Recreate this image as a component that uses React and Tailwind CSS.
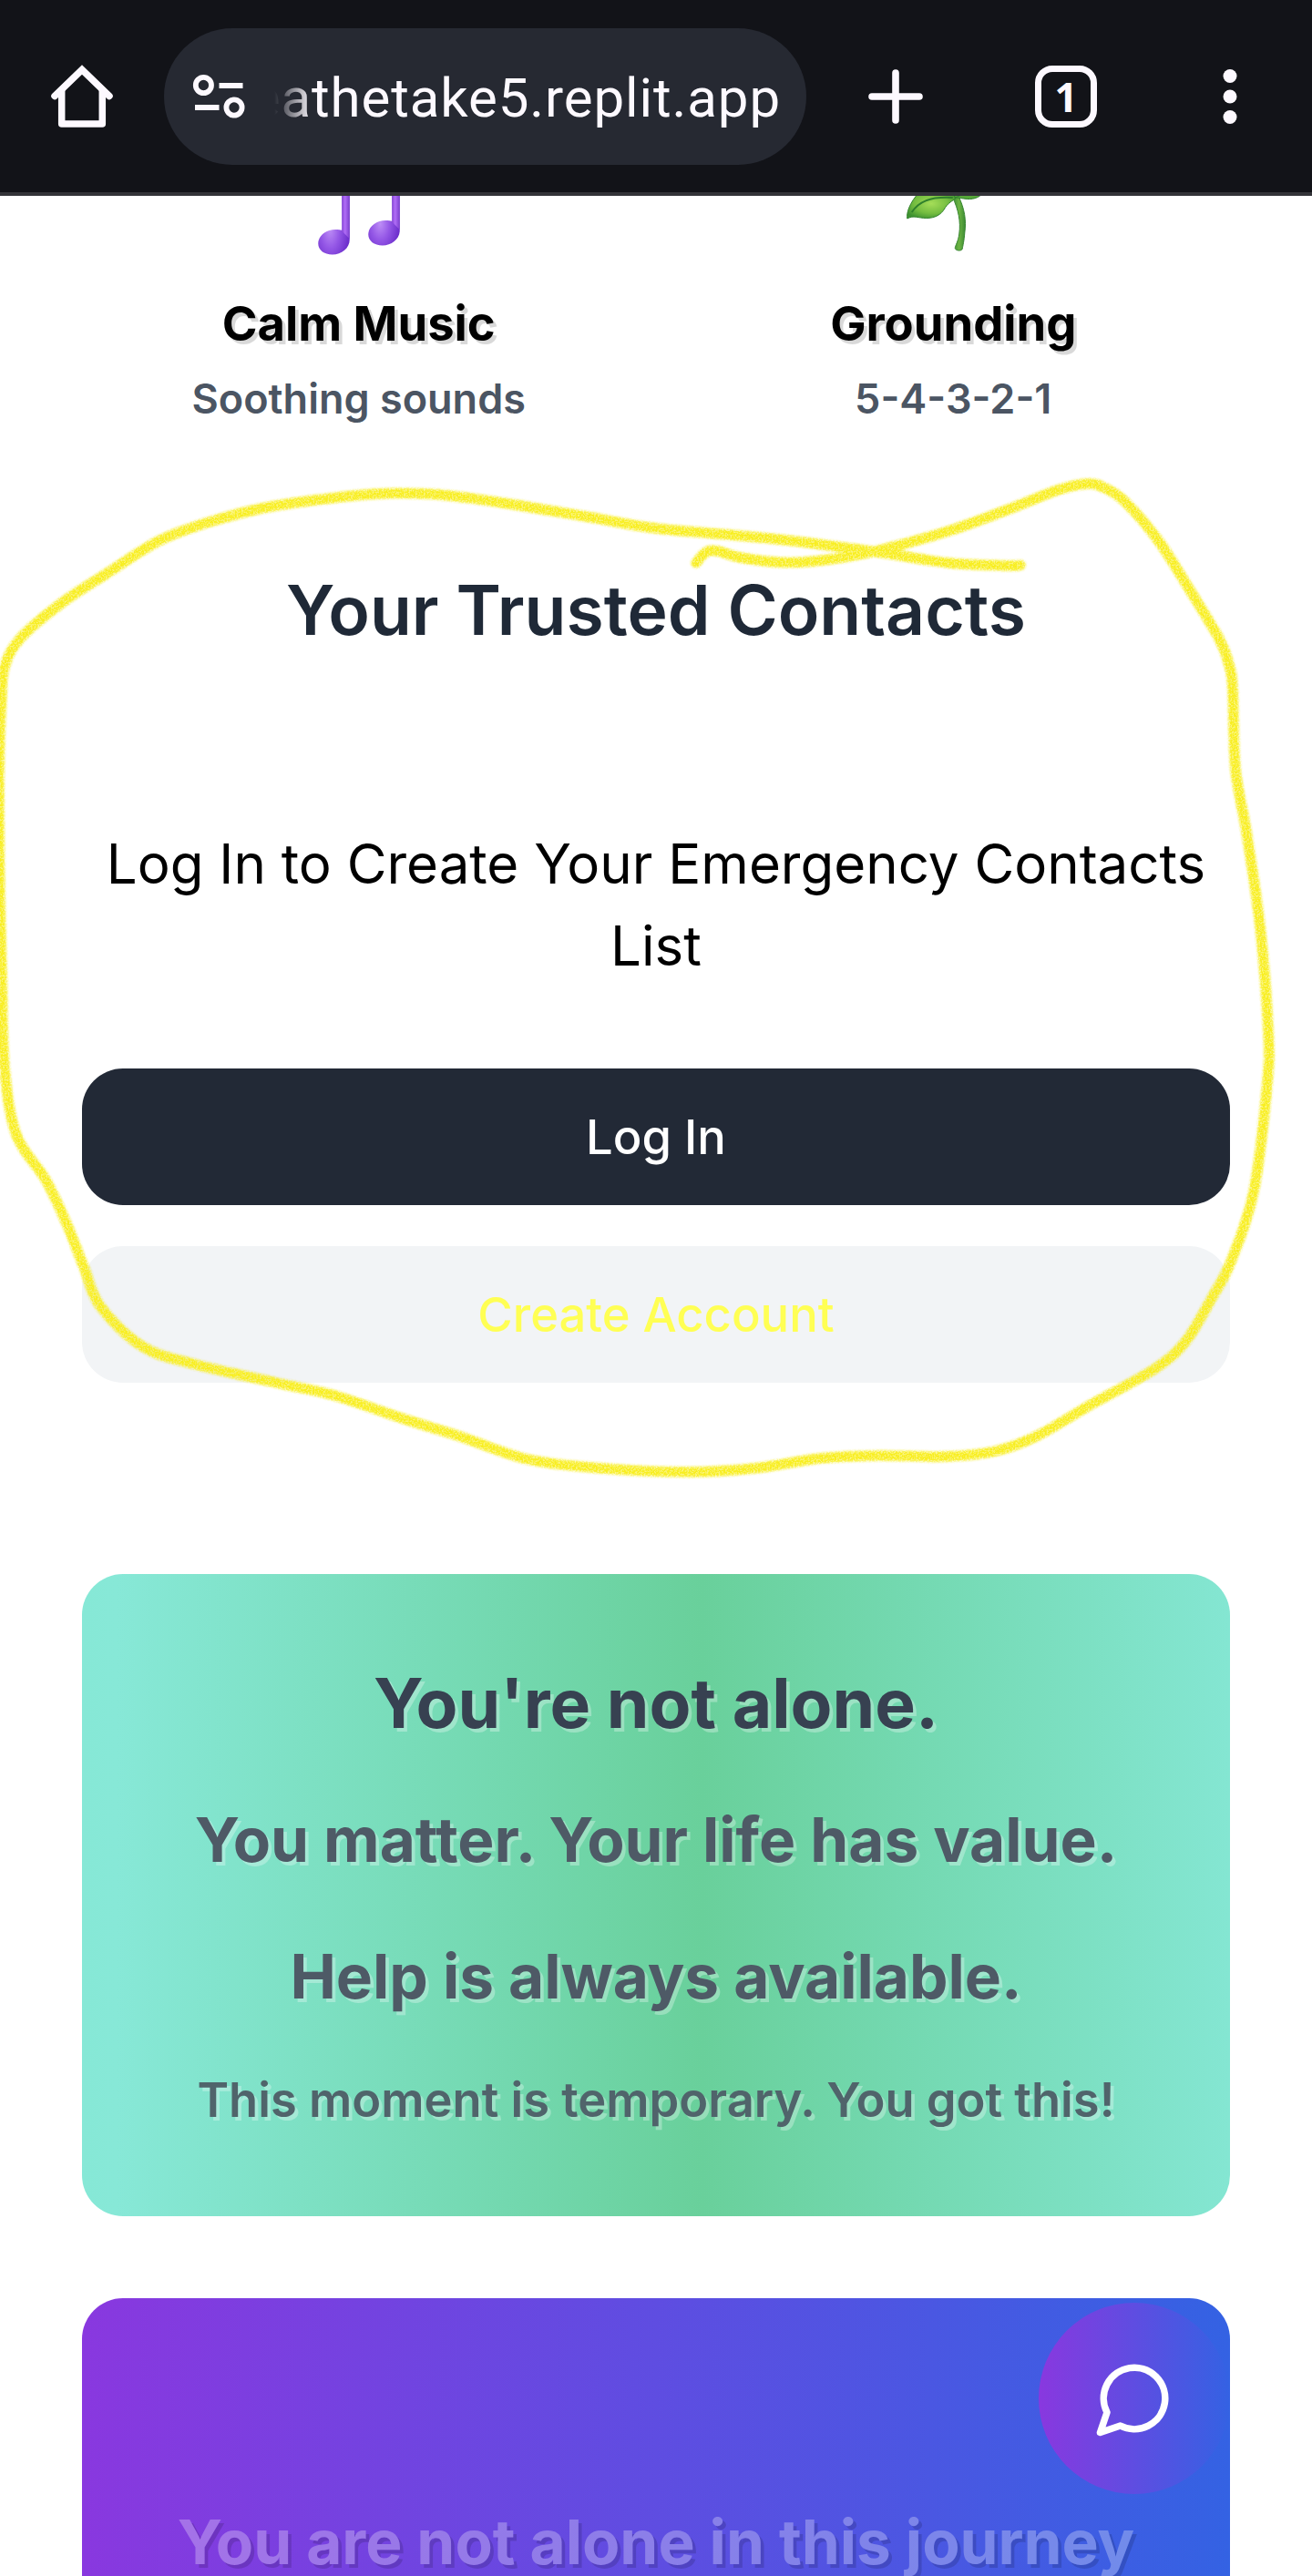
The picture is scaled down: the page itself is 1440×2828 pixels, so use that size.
const LOOP = [
  [1120, 620.5], [1106, 621], [1041, 618], [959, 605.5], [844, 591], [720, 580], [643, 567], [551, 552],
  [482, 543], [436, 541.5], [390, 544], [298, 556], [230, 573], [174, 594], [115, 631],
  [69, 661], [23, 700], [5, 732], [1.5, 770], [-1, 844], [-0.5, 959], [2, 1074], [5, 1172],
  [18, 1246], [50, 1295], [73, 1343], [92, 1391], [110, 1434], [156, 1478], [211, 1497],
  [303, 1518], [367, 1532], [441, 1557], [505, 1577], [579, 1602], [661, 1612], [753, 1616],
  [827, 1612], [900, 1601], [964, 1598], [1038, 1599], [1093, 1593], [1139, 1576],
  [1194, 1544], [1267, 1503], [1301, 1473], [1330, 1425], [1351, 1385],
  [1376, 1308], [1391, 1189], [1392, 1131], [1383, 1017], [1368, 913], [1356, 844],
  [1353, 758], [1349, 730], [1338, 701], [1303, 643], [1271, 593], [1234, 550],
  [1211, 535], [1193, 531], [1161, 538], [1110, 558], [1041, 583], [959, 605.5],
  [904, 615], [858, 617.5], [812, 612], [788, 605], [775, 606], [764, 618],
];

// Catmull-Rom spline through the given points.
function smooth(pts) {
  let d = `M${pts[0][0]} ${pts[0][1]}`;
  for (let i = 0; i < pts.length - 1; i++) {
    const a = pts[i - 1] || pts[i];
    const b = pts[i];
    const c = pts[i + 1];
    const e = pts[i + 2] || c;
    d += `C${b[0] + (c[0] - a[0]) / 6} ${b[1] + (c[1] - a[1]) / 6} ${c[0] - (e[0] - b[0]) / 6} ${c[1] - (e[1] - b[1]) / 6} ${c[0]} ${c[1]}`;
  }
  return d;
}

function BrowserBar() {
  return (
    <header className="flex h-[215px] items-start border-b-4 border-[#333338] bg-[#121318] pt-[31px] text-[#fdf9ff]">
      <svg className="ml-[45px] mt-[30px] size-[90px] shrink-0" viewBox="45 61 90 90" fill="none" stroke="currentColor" strokeWidth="7.5" strokeLinejoin="round" strokeLinecap="round">
        <path d="M60 105.5 L90 76.5 L120 105.5" strokeLinejoin="miter" />
        <path d="M67.7 99V136H112.3V99" />
      </svg>
      <div className="ml-[45px] flex h-[150px] w-[705px] shrink-0 items-center overflow-hidden rounded-full bg-[#262932]">
        <svg className="ml-[30px] h-[60px] w-[60px] shrink-0" viewBox="210 76 60 60" fill="none" stroke="currentColor" strokeWidth="5.8">
          <circle cx="223.4" cy="93.5" r="8.6" />
          <circle cx="257" cy="118" r="8.6" />
          <path d="M240.5 94H266.5M214 118H240.5" />
        </svg>
        <div className="ml-[31px] mt-[3px] flex h-[80px] w-[556px] items-center justify-end overflow-hidden whitespace-nowrap font-['Roboto',sans-serif] text-[60px] leading-[80px] tracking-[0.9px] [mask-image:linear-gradient(to_right,transparent_0,black_42px)]">
          <span>eathetake5.replit.app</span>
        </div>
      </div>
      <svg className="ml-[53px] mt-[30px] size-[90px] shrink-0" viewBox="938 61 90 90" stroke="currentColor" strokeWidth="7.6" strokeLinecap="round">
        <path d="M983 80V132M957 106H1009" />
      </svg>
      <div className="ml-[108px] mt-[41px] flex h-[68px] w-[68px] shrink-0 items-center justify-center rounded-[19px] border-[7.5px] border-current font-['Open_Sans',sans-serif] text-[44px] font-bold leading-none">
        1
      </div>
      <svg className="ml-[101px] mt-[30px] size-[90px] shrink-0" viewBox="1305 61 90 90" fill="currentColor">
        <circle cx="1350" cy="83.5" r="7.5" />
        <circle cx="1350" cy="106" r="7.5" />
        <circle cx="1350" cy="128.5" r="7.5" />
      </svg>
    </header>
  );
}

function NoteArt() {
  return (
    <svg className="h-[85px] w-[130px]" viewBox="328.75 215 130 85">
      <defs>
        <radialGradient id="head" cx="0.38" cy="0.6" r="0.6">
          <stop offset="0" stopColor="#bd8df6" />
          <stop offset="0.5" stopColor="#9457e6" />
          <stop offset="1" stopColor="#6d2fcc" />
        </radialGradient>
        <linearGradient id="stem">
          <stop offset="0" stopColor="#8a49d8" />
          <stop offset="0.4" stopColor="#b06df6" />
          <stop offset="1" stopColor="#7c3fce" />
        </linearGradient>
      </defs>
      <path d="M375 210H383.5V263C383.500 272.500 374.500 279.500 364.500 279.500C355.500 279.500 349 274.500 349 267.500C349 258.500 358 252 368 252C371 252 373.500 252.400 375 252.800Z" fill="url(#head)" />
      <path d="M375.300 210H383.300V262L375.300 254Z" fill="url(#stem)" />
      <path d="M430 210H438.500V253C438.500 262.500 429.500 269.500 419.500 269.500C410.500 269.500 404 264.500 404 257.500C404 248.500 413 242 423 242C426 242 428.500 242.400 430 242.800Z" fill="url(#head)" />
      <path d="M430.300 210H438.300V252L430.300 244Z" fill="url(#stem)" />
    </svg>
  );
}

function HerbArt() {
  return (
    <svg className="h-[85px] w-[130px]" viewBox="981.25 215 130 85">
      <defs>
        <radialGradient id="leaf" cx="0.5" cy="0.45" r="0.6">
          <stop offset="0" stopColor="#a5dd58" />
          <stop offset="0.6" stopColor="#74bd40" />
          <stop offset="1" stopColor="#3d9130" />
        </radialGradient>
        <linearGradient id="twig">
          <stop offset="0" stopColor="#3c8b34" />
          <stop offset="0.5" stopColor="#6cb443" />
          <stop offset="1" stopColor="#3c8b34" />
        </linearGradient>
      </defs>
      <path d="M1046 212L1052 215C1059 229 1061 242 1059 256C1058.500 264 1057 270 1056.500 273C1056 276 1049 275.500 1048.500 272.500C1048.500 270 1052 265 1053 257C1055 243 1052 230 1046 217Z" fill="url(#twig)" stroke="#35842f" strokeWidth="1" />
      <path d="M996 240C995 234 998 223 1010 210H1045L1049 218C1043 222 1040 224 1037 229C1033 236 1026 239.500 1017 239.500C1008 239.500 1003 236 996 240Z" fill="url(#leaf)" stroke="#35842f" strokeWidth="1" />
      <path d="M1001 233C1008 222 1020 215.500 1046 217" fill="none" stroke="#2f7f2c" strokeWidth="2" />
      <path d="M1048 217C1054 215 1056 214 1060 210H1080C1077 216 1070 219 1062 218.500C1056 218 1053 217 1048 217Z" fill="#56a63a" stroke="#2f7f2c" strokeWidth="1" />
    </svg>
  );
}

function Tool({ art, title, note }) {
  return (
    <div className="flex flex-col items-center">
      {art}
      <h3 className="mt-[17.5px] text-[52.5px] font-bold leading-[75px] text-black [text-shadow:3.75px_3.75px_0_rgba(0,0,0,0.15)]">{title}</h3>
      <p className="mt-[15px] text-[45px] font-semibold leading-[60px] text-[#4b5563]">{note}</p>
    </div>
  );
}

export default function App() {
  return (
    <div className="relative h-[2828px] w-[1440px] overflow-hidden bg-white font-['Inter',sans-serif]">
      <BrowserBar />
      <main className="px-[90px] text-center">
        <section className="grid grid-cols-2 gap-[45px]">
          <Tool art={<NoteArt />} title="Calm Music" note="Soothing sounds" />
          <Tool art={<HerbArt />} title="Grounding" note="5-4-3-2-1" />
        </section>

        <section className="mt-[152px]">
          <h2 className="text-[75px] font-semibold leading-[100px] text-[#1f2937]">Your Trusted Contacts</h2>
          <p className="mt-[183px] text-[60px] leading-[90px] text-black">Log In to Create Your Emergency Contacts List</p>
          <div className="mt-[90.5px] flex flex-col gap-[45px]">
            <button className="h-[150px] rounded-[45px] bg-[#222936] text-[52.5px] font-medium text-white">Log In</button>
            <button className="h-[150px] rounded-[45px] bg-[#f2f4f6] text-[52.5px] font-medium text-[#ffff54]">Create Account</button>
          </div>
        </section>

        <section className="mt-[210px] h-[705px] rounded-[45px] bg-[linear-gradient(to_right,#86e8d6_0%,#87e8d7_3%,#69d09b_54%,#84e6d2_100%)] pt-[97px] font-bold text-[#4e5a66] [font-variant-ligatures:none] [text-shadow:3.75px_3.75px_0_rgba(255,255,255,0.3)]">
          <h2 className="text-[75px] leading-[90px] text-[#374151]">You're not alone.</h2>
          <p className="mt-[60px] text-[67.5px] leading-[90px]">You matter. Your life has value.</p>
          <p className="mt-[60px] text-[67.5px] leading-[90px]">Help is always available.</p>
          <p className="mt-[50px] text-[52.5px] font-semibold leading-[80px] text-[#50646b]">This moment is temporary. You got this!</p>
        </section>

        <section className="relative mt-[90px] h-[400px] rounded-t-[45px] bg-linear-[90deg,#8938df,#3462e3] pt-[223px]">
          <p className="text-[67.5px] font-bold leading-[90px] text-white opacity-[0.28] [text-shadow:3.75px_3.75px_0_rgba(0,0,0,0.5)]">You are not alone in this journey</p>
          <button className="absolute right-0 top-[5px] flex size-[210px] items-center justify-center rounded-full bg-linear-[90deg,#8938df,#3462e3]">
            <svg className="size-[90px]" viewBox="0 0 24 24" fill="none" stroke="white" strokeWidth="2" strokeLinecap="round" strokeLinejoin="round">
              <path d="M7.9 20A9 9 0 1 0 4 16.1L2 22Z" />
            </svg>
          </button>
        </section>
      </main>

      <svg className="pointer-events-none absolute left-0 top-0 h-[2828px] w-[1440px]" viewBox="0 0 1440 2828" fill="none">
        <filter id="crayon" filterUnits="userSpaceOnUse" x="-20" y="500" width="1460" height="1160" colorInterpolationFilters="sRGB">
          <feTurbulence type="fractalNoise" baseFrequency="0.55" numOctaves="2" seed="4" result="n" />
          <feColorMatrix in="n" type="matrix" values="0 0 0 0 0  0 0 0 0 0  0 0 0 0 0  4 0 0 0 -1.300" result="grain" />
          <feGaussianBlur in="SourceGraphic" stdDeviation="1.5" result="soft" />
          <feComposite in="soft" in2="grain" operator="in" result="rough" />
          <feComponentTransfer in="soft" result="base">
            <feFuncA type="linear" slope="0.6" />
          </feComponentTransfer>
          <feMerge>
            <feMergeNode in="base" />
            <feMergeNode in="rough" />
          </feMerge>
        </filter>
        <path d={smooth(LOOP)} stroke="#f8ee20" strokeWidth="10.5" strokeLinecap="round" strokeLinejoin="round" filter="url(#crayon)" />
      </svg>
    </div>
  );
}
